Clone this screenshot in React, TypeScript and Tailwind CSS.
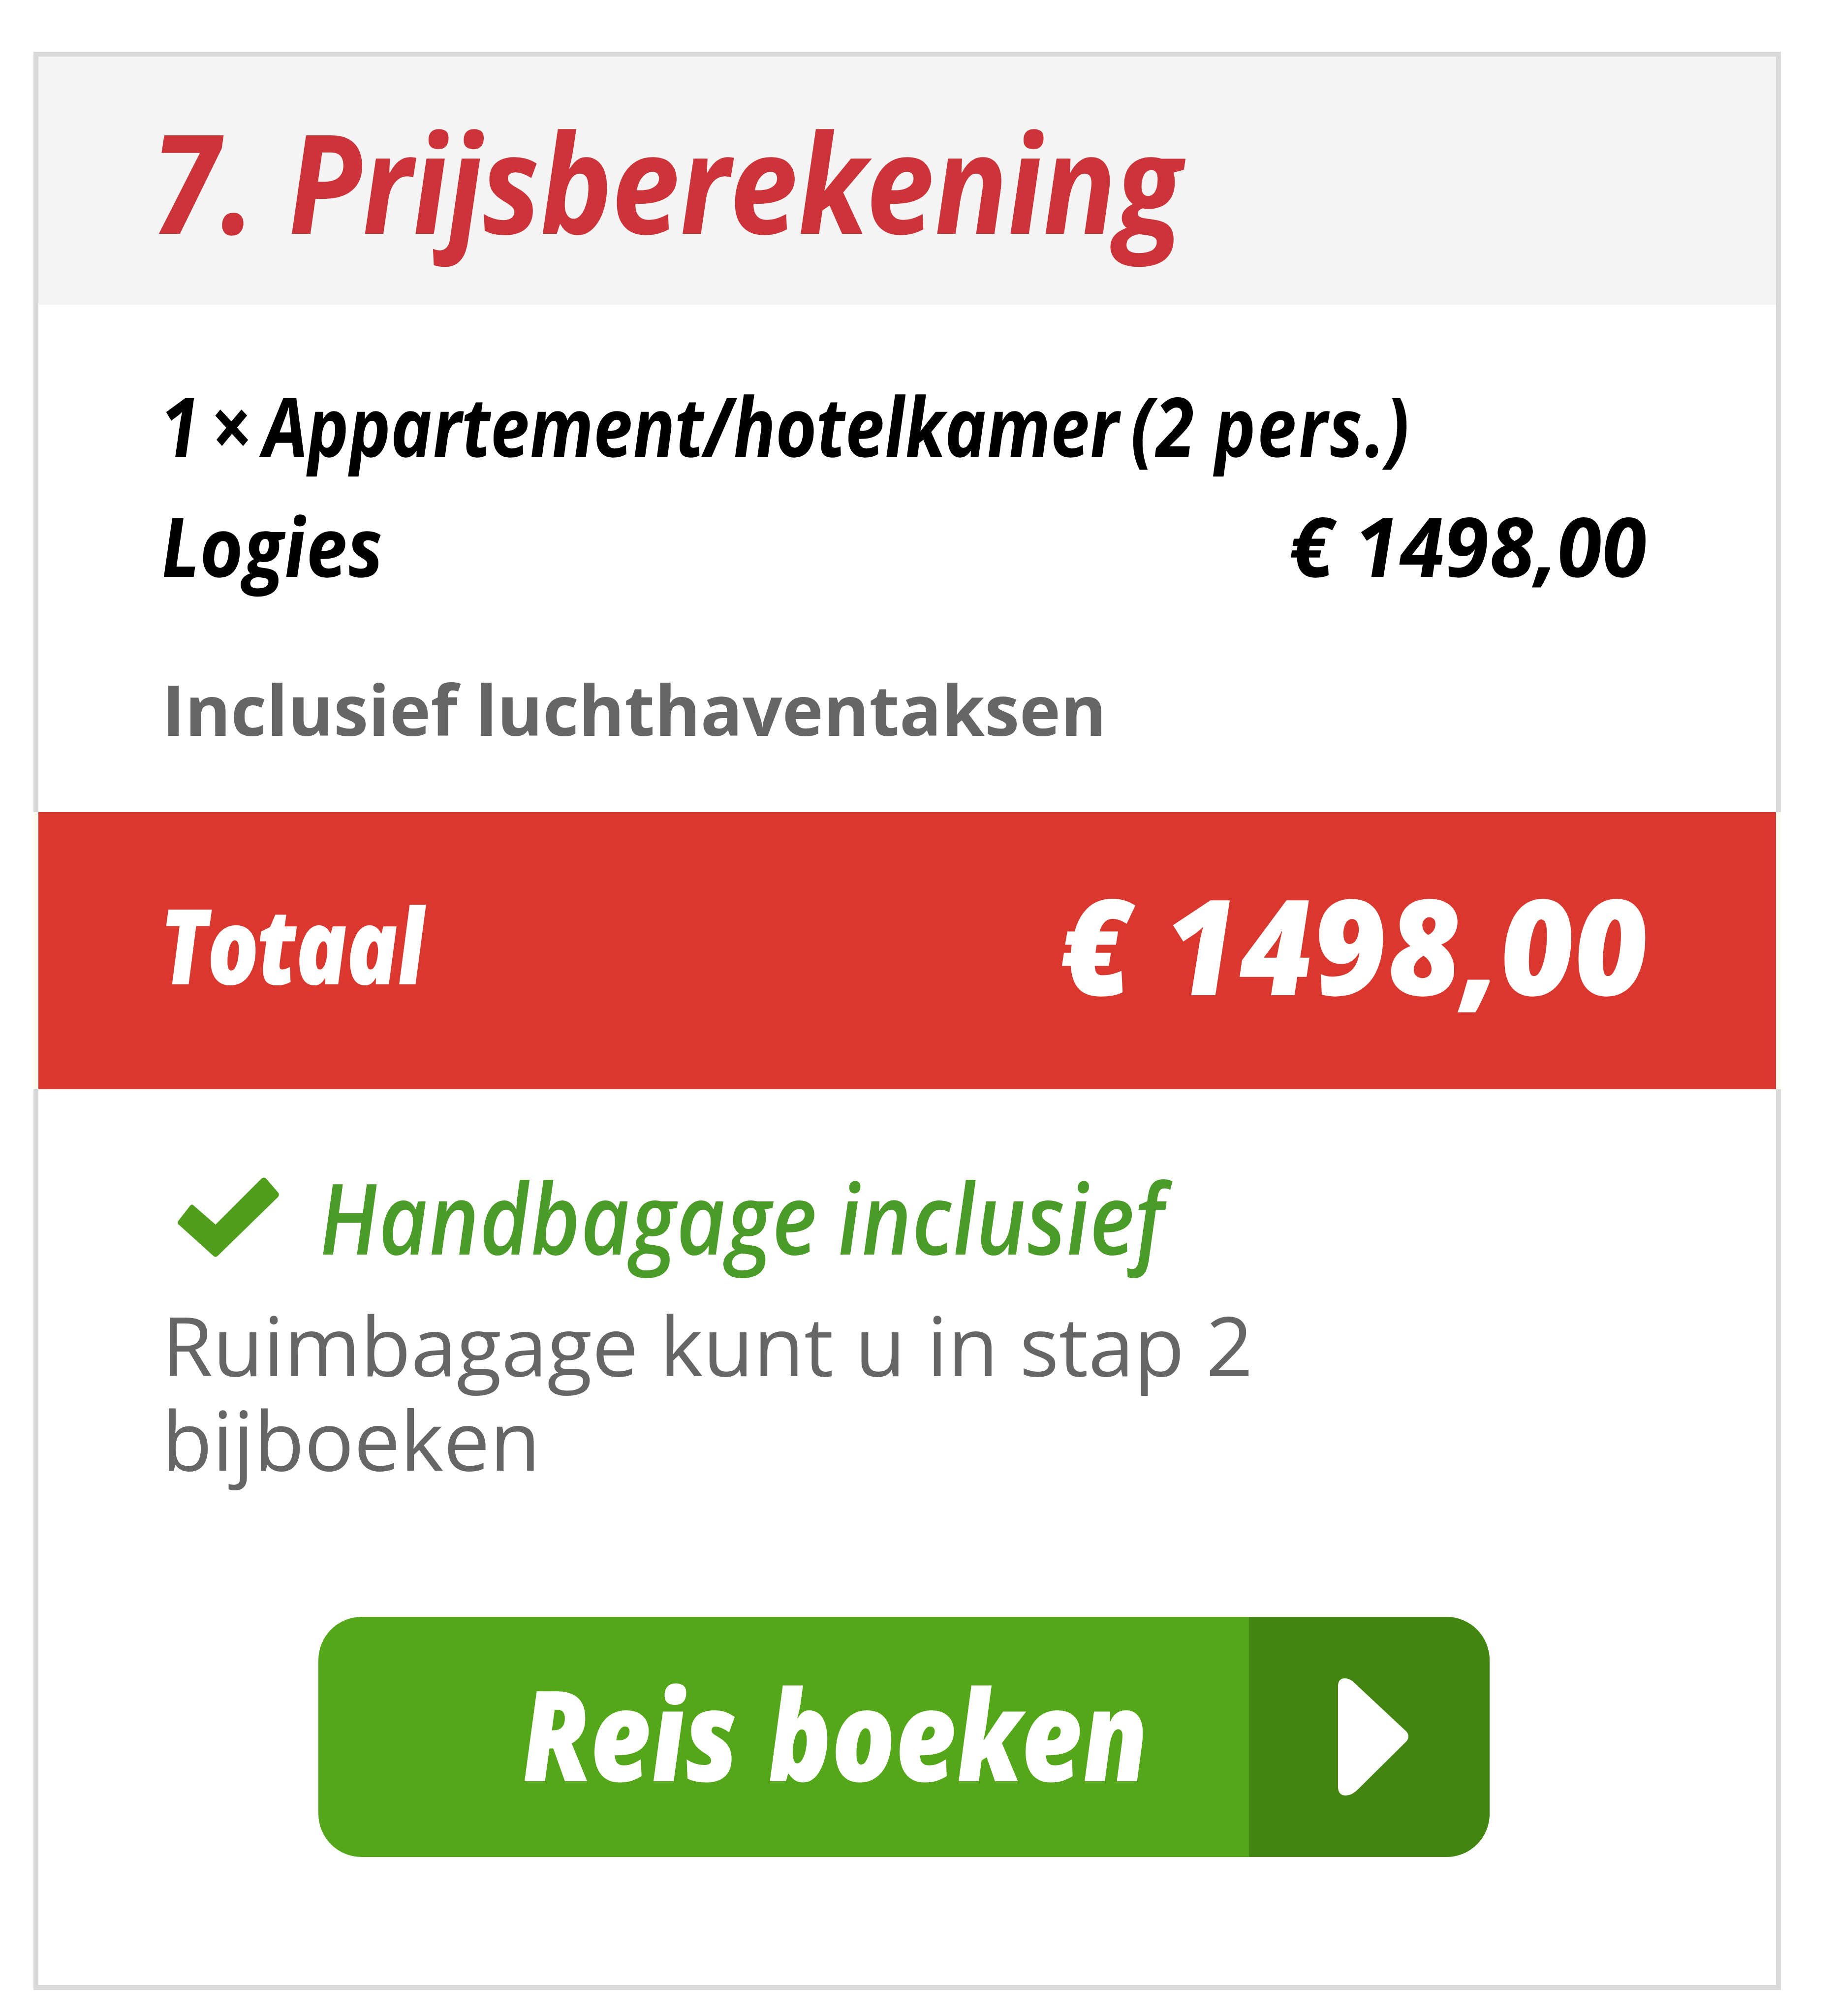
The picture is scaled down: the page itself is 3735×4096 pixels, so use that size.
import type { ReactNode } from 'react';

interface DisplayTextProps {
  className: string;
  children: ReactNode;
}

// Condensed italic face used for headings, prices and the button
function DisplayText({ className, children }: DisplayTextProps) {
  return (
    <span className={`block w-fit skew-x-3 whitespace-nowrap italic ${className}`}>{children}</span>
  );
}

function CheckIcon() {
  return (
    <svg className="h-[168px] w-[212px] shrink-0" viewBox="0 0 212 168" fill="#4f9f1c">
      <path d="M34 60 L80 100 L174 6 Q180 2 184 8 L208 36 Q210 40 207 44 L84 164 Q80 167 76 164 L4 99 Q2 96 4 93 L28 62 Q31 58 34 60 Z" />
    </svg>
  );
}

function PlayIcon() {
  return (
    <svg className="h-[242px] w-[150px]" viewBox="0 0 150 242" fill="#ffffff">
      <path d="M4 18 Q4 2 18 2 Q28 2 36 10 L143 110 Q151 120 143 130 L44 228 Q32 240 20 240 Q4 240 4 222 Z" />
    </svg>
  );
}

export default function App() {
  return (
    <div className="h-[4096px] w-[3735px] overflow-hidden bg-white pt-[105px] pl-[68px] font-['Open_Sans','Noto_Sans',sans-serif]">
      <div className="flex h-[3938px] w-[3551px] flex-col border-[10px] border-[#d9d9d9] bg-white">
        <header className="flex h-[504px] shrink-0 items-center bg-[#f4f4f4] pl-[230px]">
          <h2 className="leading-[400px] text-[#cc343a]">
            <DisplayText className="origin-left scale-x-[0.906] text-[280px] font-bold tracking-[-0.016em] [word-spacing:0.03em]">
              7. Prijsberekening
            </DisplayText>
          </h2>
        </header>

        <section className="h-[1031px] shrink-0 pt-[123px] pr-[263px] pl-[248px] text-black">
          <div className="leading-[244px]">
            <DisplayText className="origin-left scale-x-[0.87] text-[167px] font-bold tracking-[-0.01em] [word-spacing:-0.09em]">
              1 × Appartement/hotelkamer <span className="tracking-[0.015em] [word-spacing:-0.03em]">(2 pers.)</span>
            </DisplayText>
          </div>
          <div className="flex justify-between leading-[244px]">
            <DisplayText className="origin-left scale-x-[0.91] text-[167px] font-bold">Logies</DisplayText>
            <DisplayText className="origin-right scale-x-[0.99] text-[167px] font-bold">
              € 1498,00
            </DisplayText>
          </div>
          <p className="mt-[110px] pl-[3px] text-[141.6px] leading-[200px] font-bold text-[#666666]">
            Inclusief luchthaventaksen
          </p>
        </section>

        <section className="-mx-[10px] flex h-[563px] shrink-0 items-center justify-between border-x-[10px] border-[#fbfbf0] bg-[#da382f] pr-[261px] pb-[28px] pl-[248px] text-white">
          <DisplayText className="origin-left scale-x-[0.825] text-[213px] font-extrabold tracking-[-0.02em]">
            Totaal
          </DisplayText>
          <DisplayText className="origin-right scale-x-[0.96] text-[270px] font-extrabold">
            € 1498,00
          </DisplayText>
        </section>

        <section className="flex flex-col pt-[139px] pl-[246px]">
          <div className="flex items-center pl-[34px] leading-[240px] text-[#4b9b28]">
            <CheckIcon />
            <DisplayText className="ml-[77px] origin-left scale-x-[0.876] text-[200px] font-semibold [word-spacing:-0.03em]">
              Handbagage inclusief
            </DisplayText>
          </div>
          <p className="mt-[43px] pl-[5px] text-[167.5px] leading-[192px] text-[#666666]">
            Ruimbagage kunt u in stap 2
            <br />
            bijboeken
          </p>
          <button
            type="button"
            className="mt-[266px] ml-[323px] flex h-[488px] w-[2380px] overflow-hidden rounded-[88px] bg-[#54a719] text-white"
          >
            <span className="flex h-full w-[1891px] items-center pb-[18px] pl-[411px]">
              <DisplayText className="origin-left scale-x-[0.85] text-[256px] font-extrabold tracking-[-0.01em] [word-spacing:0.03em]">
                Reis boeken
              </DisplayText>
            </span>
            <span className="flex h-full flex-1 items-center bg-[#428611] pl-[177px]">
              <PlayIcon />
            </span>
          </button>
        </section>
      </div>
    </div>
  );
}
